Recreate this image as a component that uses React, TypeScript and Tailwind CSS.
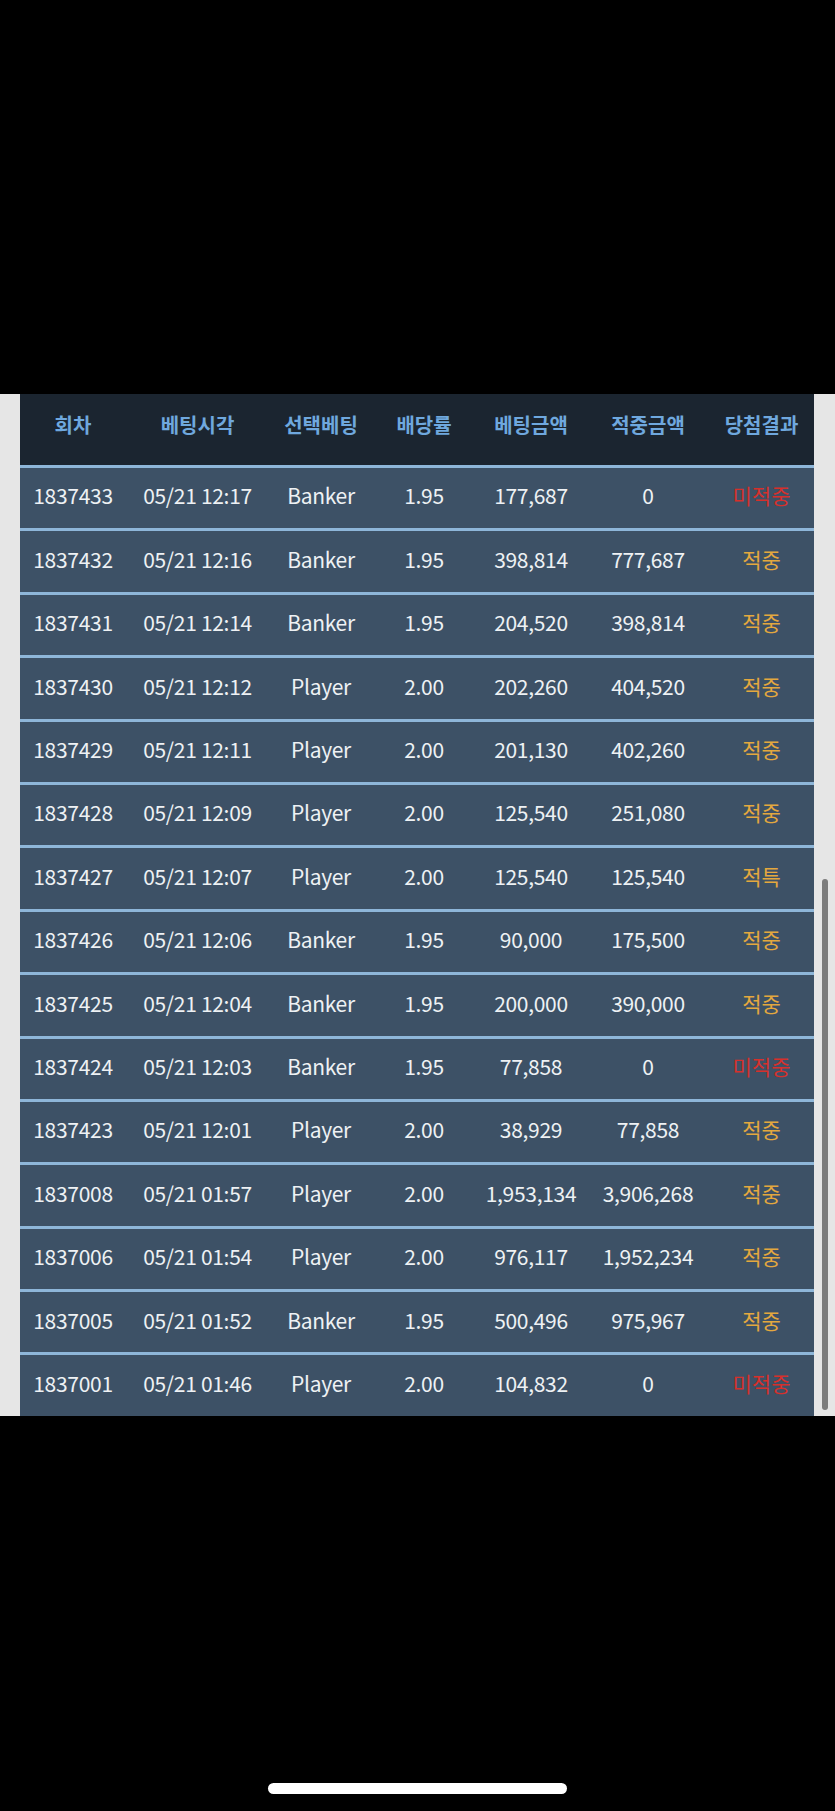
const rows = [
  ['1837433', '05/21 12:17', 'Banker', '1.95', '177,687', '0', '미적중'],
  ['1837432', '05/21 12:16', 'Banker', '1.95', '398,814', '777,687', '적중'],
  ['1837431', '05/21 12:14', 'Banker', '1.95', '204,520', '398,814', '적중'],
  ['1837430', '05/21 12:12', 'Player', '2.00', '202,260', '404,520', '적중'],
  ['1837429', '05/21 12:11', 'Player', '2.00', '201,130', '402,260', '적중'],
  ['1837428', '05/21 12:09', 'Player', '2.00', '125,540', '251,080', '적중'],
  ['1837427', '05/21 12:07', 'Player', '2.00', '125,540', '125,540', '적특'],
  ['1837426', '05/21 12:06', 'Banker', '1.95', '90,000', '175,500', '적중'],
  ['1837425', '05/21 12:04', 'Banker', '1.95', '200,000', '390,000', '적중'],
  ['1837424', '05/21 12:03', 'Banker', '1.95', '77,858', '0', '미적중'],
  ['1837423', '05/21 12:01', 'Player', '2.00', '38,929', '77,858', '적중'],
  ['1837008', '05/21 01:57', 'Player', '2.00', '1,953,134', '3,906,268', '적중'],
  ['1837006', '05/21 01:54', 'Player', '2.00', '976,117', '1,952,234', '적중'],
  ['1837005', '05/21 01:52', 'Banker', '1.95', '500,496', '975,967', '적중'],
  ['1837001', '05/21 01:46', 'Player', '2.00', '104,832', '0', '미적중'],
];

const headers = ['회차', '베팅시각', '선택베팅', '배당률', '베팅금액', '적중금액', '당첨결과'];

const cols = 'grid grid-cols-[106px_143px_104px_102px_112px_122px_105px]';

export default function App() {
  return (
    <div
      className="min-h-[1811px] bg-black flex flex-col"
      style={{ fontFamily: '"Noto Sans CJK KR", "Noto Sans", sans-serif' }}
    >
      <div className="h-[394px]" />

      {/* bet history table */}
      <div className="relative bg-[#e6e6e6] px-[20px]">
        <div className="w-[794px]">
          <div className={`${cols} h-[71px] items-center bg-[#1b2530] pb-[9px]`}>
            {headers.map((h) => (
              <div key={h} className="text-center text-[20px] font-bold text-[#6fa8de]">
                {h}
              </div>
            ))}
          </div>

          {rows.map((r) => {
            const miss = r[6] === '미적중';
            return (
              <div
                key={r[0]}
                className={`${cols} h-[63.4px] items-center border-t-[3px] border-[#8eb6d9] bg-[#3d5166] pb-[4px] text-[21px] text-[#eef1f4]`}
              >
                {r.slice(0, 6).map((c, i) => (
                  <div key={i} className="text-center tracking-[-0.3px]">
                    {c}
                  </div>
                ))}
                <div className={`text-center ${miss ? 'text-[#d6302c]' : 'text-[#e4a83e]'}`}>
                  {r[6]}
                </div>
              </div>
            );
          })}
        </div>

        <div className="absolute right-[7px] top-[485px] h-[531px] w-[6px] rounded-full bg-[#7c7c7c]" />
      </div>

      <div className="flex-1 flex items-end justify-center pb-[17px]">
        <div className="h-[11px] w-[299px] rounded-full bg-white" />
      </div>
    </div>
  );
}
